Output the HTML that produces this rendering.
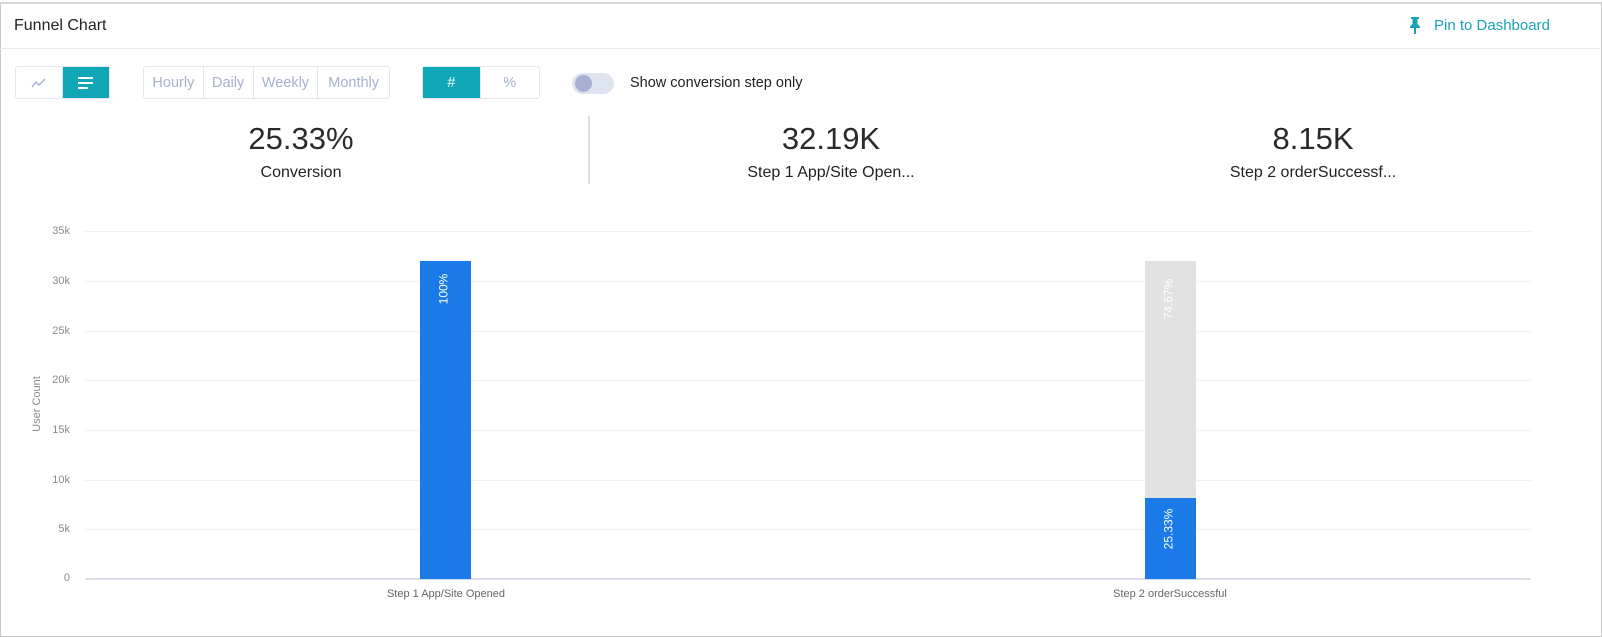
<!DOCTYPE html>
<html><head><meta charset="utf-8"><style>
*{box-sizing:border-box;margin:0;padding:0}
body{width:1602px;height:637px;background:#fff;font-family:"Liberation Sans",sans-serif;position:relative;overflow:hidden}
.card{position:absolute;left:0;top:2px;width:1602px;height:635px;border:1px solid #c9c9c9;border-top:2px solid #d6d6d6;background:#fff}
.abs{position:absolute}
.hdr{left:0;top:0;width:1600px;height:47px;border-bottom:1px solid #e6e9f0}
.title{left:14px;top:17px;font-size:16px;color:#222}
.pin{left:1408px;top:17px;font-size:15px;color:#1aa3b4}
.grp{border:1px solid #e3e6ee;border-radius:3px;display:flex;height:33px}
.grp div{display:flex;align-items:center;justify-content:center;color:#a6b1cc;font-size:14.5px;border-right:1px solid #e3e6ee}
.grp div:last-child{border-right:none}
.on{background:#0fa6b6;color:#fff!important}
.num{font-size:31px;color:#2a2a2a;text-align:center;width:400px}
.lbl{font-size:16px;color:#222;text-align:center;width:400px}
.yl{font-size:11px;color:#8a8a8a;text-align:right;width:30px}
.gl{left:85px;width:1446px;height:1px;background:#eef0f3}
.xl{font-size:11px;color:#666;text-align:center;width:200px}
.vt{transform:rotate(-90deg);color:#fff;font-size:12px;white-space:nowrap}
</style></head><body>
<div class="card"></div>
<div class="abs hdr" style="top:2px"></div>
<div class="abs title">Funnel Chart</div>
<svg class="abs" style="left:1408px;top:17px" width="14" height="17" viewBox="0 0 14 17"><path d="M3 0h8v2H9.5v5l2.5 2.5V11H8v6H6v-6H2V9.5L4.5 7V2H3z" fill="#1aa3b4"/></svg>
<div class="abs pin" style="left:1434px">Pin to Dashboard</div>

<div class="abs grp" style="left:15px;top:66px;width:95px">
 <div style="width:47px"><svg width="16" height="10" viewBox="0 0 16 10"><path d="M1 9l4-5 3 3 6-6" stroke="#a6b1cc" stroke-width="1.4" fill="none"/></svg></div>
 <div class="on" style="width:47px"><svg width="16" height="12" viewBox="0 0 16 12"><rect x="0" y="0" width="15" height="2" fill="#fff"/><rect x="0" y="5" width="15" height="2" fill="#fff"/><rect x="0" y="10" width="10" height="2" fill="#fff"/></svg></div>
</div>
<div class="abs grp" style="left:143px;top:66px;width:247px">
 <div style="width:60px">Hourly</div><div style="width:50px">Daily</div><div style="width:65px">Weekly</div><div style="width:71px">Monthly</div>
</div>
<div class="abs grp" style="left:422px;top:66px;width:118px">
 <div class="on" style="width:58px">#</div><div style="width:59px">%</div>
</div>
<div class="abs" style="left:572px;top:73px;width:42px;height:21px;border-radius:11px;background:#dfe3ef"></div>
<div class="abs" style="left:575px;top:75px;width:17px;height:17px;border-radius:50%;background:#a5b0d3"></div>
<div class="abs" style="left:630px;top:75px;font-size:14.5px;color:#222">Show conversion step only</div>

<div class="abs num" style="left:101px;top:121px">25.33%</div>
<div class="abs lbl" style="left:101px;top:164px">Conversion</div>
<div class="abs" style="left:588px;top:116px;width:2px;height:68px;background:#ddd"></div>
<div class="abs num" style="left:631px;top:121px">32.19K</div>
<div class="abs lbl" style="left:631px;top:164px">Step 1 App/Site Open...</div>
<div class="abs num" style="left:1113px;top:121px">8.15K</div>
<div class="abs lbl" style="left:1113px;top:164px">Step 2 orderSuccessf...</div>

<div class="abs gl" style="top:231px"></div>
<div class="abs gl" style="top:281px"></div>
<div class="abs gl" style="top:331px"></div>
<div class="abs gl" style="top:380px"></div>
<div class="abs gl" style="top:430px"></div>
<div class="abs gl" style="top:480px"></div>
<div class="abs gl" style="top:529px"></div>
<div class="abs gl" style="top:578px;height:2px;background:#d8dcea"></div>
<div class="abs yl" style="left:40px;top:225px">35k</div>
<div class="abs yl" style="left:40px;top:275px">30k</div>
<div class="abs yl" style="left:40px;top:325px">25k</div>
<div class="abs yl" style="left:40px;top:374px">20k</div>
<div class="abs yl" style="left:40px;top:424px">15k</div>
<div class="abs yl" style="left:40px;top:474px">10k</div>
<div class="abs yl" style="left:40px;top:523px">5k</div>
<div class="abs yl" style="left:40px;top:572px">0</div>
<div class="abs" style="left:2px;top:398px;width:70px;text-align:center;transform:rotate(-90deg);font-size:11px;color:#8a8a8a">User Count</div>

<div class="abs" style="left:420px;top:261px;width:51px;height:318px;background:#1a7ae8"></div>
<div class="abs vt" style="left:428px;top:282px">100%</div>
<div class="abs" style="left:1145px;top:261px;width:51px;height:237px;background:#e2e2e2"></div>
<div class="abs vt" style="left:1148px;top:292px">74.67%</div>
<div class="abs" style="left:1145px;top:498px;width:51px;height:81px;background:#1a7ae8"></div>
<div class="abs vt" style="left:1148px;top:522px">25.33%</div>

<div class="abs xl" style="left:346px;top:588px">Step 1 App/Site Opened</div>
<div class="abs xl" style="left:1070px;top:588px">Step 2 orderSuccessful</div>
</body></html>
